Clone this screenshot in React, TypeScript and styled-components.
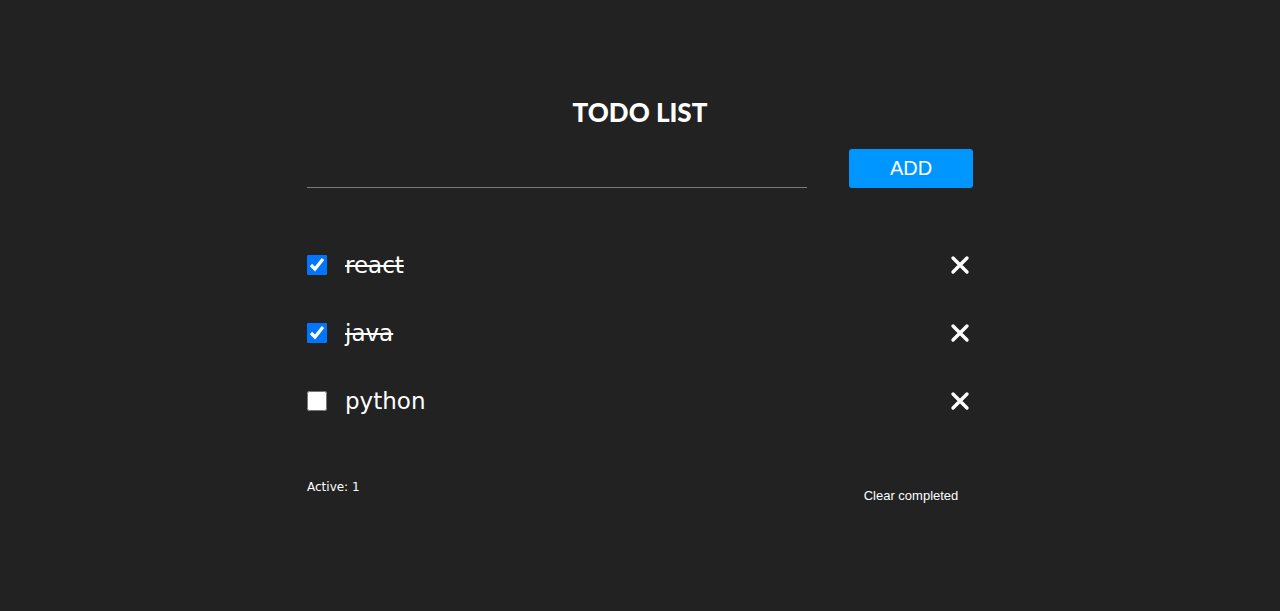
import React, { useState } from "react";
import styled, { createGlobalStyle } from "styled-components";

const GlobalStyle = createGlobalStyle`
  html, body {
    margin: 0;
    padding: 0;
    background: #222222;
  }
  body {
    font-family: "DejaVu Sans", "Noto Sans", sans-serif;
    color: #ffffff;
  }
`;

const Page = styled.div`
  min-height: 611px;
  background: #222222;
  padding-top: 95px;
  box-sizing: border-box;
`;

const Container = styled.div`
  width: 666px;
  margin: 0 auto;
`;

const Title = styled.h1`
  margin: 0;
  height: 34px;
  line-height: 34px;
  text-align: center;
  font-family: "Lato", "DejaVu Sans", sans-serif;
  font-size: 26px;
  font-weight: 900;
  color: #ffffff;
`;

const Form = styled.form`
  margin-top: 20px;
  display: flex;
  justify-content: space-between;
  align-items: flex-end;
`;

const Input = styled.input`
  width: 500px;
  height: 30px;
  background: transparent;
  border: none;
  border-bottom: 1px solid #7a7a7a;
  outline: none;
  color: #fff;
  font-family: inherit;
  font-size: 18px;
  padding: 0;
`;

const AddButton = styled.button`
  width: 124px;
  height: 39px;
  background: #0096ff;
  color: #ffffff;
  border: none;
  border-radius: 3px;
  font-family: "Liberation Sans", Arial, sans-serif;
  font-size: 20px;
  cursor: pointer;
`;

const List = styled.ul`
  list-style: none;
  margin: 43px 0 0;
  padding: 0;
`;

const Row = styled.li`
  height: 68px;
  display: flex;
  align-items: center;
`;

const Check = styled.input`
  width: 20px;
  height: 20px;
  margin: 0;
  accent-color: #0075ff;
  cursor: pointer;
`;

const Label = styled.span<{ $done: boolean }>`
  margin-left: 18px;
  font-size: 23px;
  color: #ffffff;
  text-decoration: ${(p) => (p.$done ? "line-through" : "none")};
  text-decoration-thickness: 2px;
  flex: 1;
`;

const RemoveButton = styled.button`
  width: 24px;
  height: 24px;
  margin-right: 1px;
  padding: 0;
  background: transparent;
  border: none;
  display: flex;
  align-items: center;
  justify-content: center;
  cursor: pointer;
`;

const Footer = styled.div`
  margin-top: 42px;
  display: flex;
  justify-content: space-between;
  align-items: flex-start;
`;

const Active = styled.span`
  font-size: 12px;
  line-height: 20px;
  color: #ffffff;
`;

const ClearColumn = styled.div`
  width: 124px;
  display: flex;
  justify-content: center;
  padding-top: 9px;
`;

const ClearButton = styled.button`
  background: transparent;
  border: none;
  padding: 0;
  color: #ffffff;
  font-family: "Liberation Sans", Arial, sans-serif;
  font-size: 13px;
  line-height: 20px;
  cursor: pointer;
`;

const XIcon = () => (
  <svg width="20" height="20" viewBox="0 0 20 20">
    <path d="M3 3 L17 17 M17 3 L3 17" stroke="#ffffff" strokeWidth="3.4" strokeLinecap="round" />
  </svg>
);

type Todo = { id: number; text: string; done: boolean };

export default function App() {
  const [todos, setTodos] = useState<Todo[]>([
    { id: 1, text: "react", done: true },
    { id: 2, text: "java", done: true },
    { id: 3, text: "python", done: false },
  ]);
  const [value, setValue] = useState("");

  const active = todos.filter((t) => !t.done).length;

  return (
    <Page>
      <GlobalStyle />
      <Container>
        <Title>TODO LIST</Title>
        <Form
          onSubmit={(e) => {
            e.preventDefault();
            if (!value.trim()) return;
            setTodos([...todos, { id: Date.now(), text: value, done: false }]);
            setValue("");
          }}
        >
          <Input value={value} onChange={(e) => setValue(e.target.value)} />
          <AddButton type="submit">ADD</AddButton>
        </Form>
        <List>
          {todos.map((t) => (
            <Row key={t.id}>
              <Check
                type="checkbox"
                checked={t.done}
                onChange={() =>
                  setTodos(todos.map((x) => (x.id === t.id ? { ...x, done: !x.done } : x)))
                }
              />
              <Label $done={t.done}>{t.text}</Label>
              <RemoveButton onClick={() => setTodos(todos.filter((x) => x.id !== t.id))}>
                <XIcon />
              </RemoveButton>
            </Row>
          ))}
        </List>
        <Footer>
          <Active>Active: {active}</Active>
          <ClearColumn>
            <ClearButton onClick={() => setTodos(todos.filter((t) => !t.done))}>
              Clear completed
            </ClearButton>
          </ClearColumn>
        </Footer>
      </Container>
    </Page>
  );
}
